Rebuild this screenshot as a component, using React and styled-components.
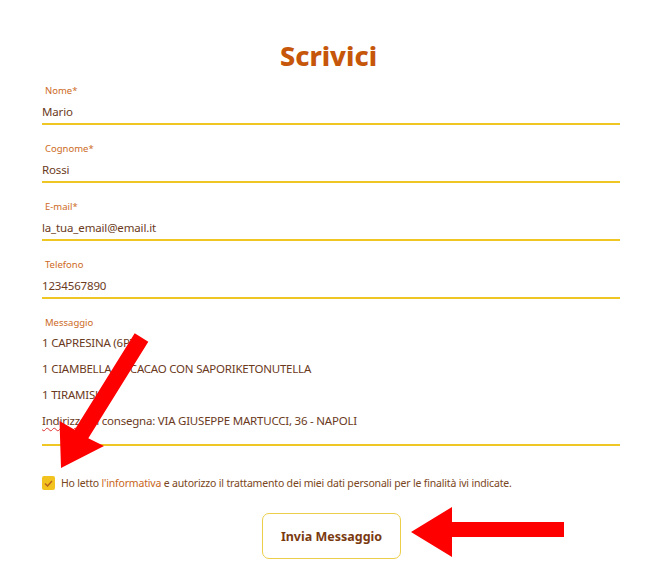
import React from "react";
import styled, { createGlobalStyle } from "styled-components";

const fields = [
  { label: "Nome*", value: "Mario" },
  { label: "Cognome*", value: "Rossi" },
  { label: "E-mail*", value: "la_tua_email@email.it" },
  { label: "Telefono", value: "1234567890" },
];

const GlobalStyle = createGlobalStyle`
  * { box-sizing: border-box; }
  body {
    margin: 0;
    background: #ffffff;
    font-family: "Noto Sans", "Open Sans", sans-serif;
  }
`;

export default function App() {
  return (
    <>
      <GlobalStyle />
      <Page>
        <Title>Scrivici</Title>
        <Form>
          {fields.map(({ label, value }) => (
            <Field key={label}>
              <Label>{label}</Label>
              <Value>{value}</Value>
            </Field>
          ))}

          <Field>
            <Label>Messaggio</Label>
            <Message>
              <div>1 CAPRESINA (6PZ)</div>
              <div>1 CIAMBELLA AL CACAO CON SAPORIKETONUTELLA</div>
              <div>1 TIRAMISU'</div>
              <div>
                <Misspelled>Indirizzo</Misspelled> di consegna: VIA GIUSEPPE MARTUCCI, 36 - NAPOLI
              </div>
            </Message>
          </Field>

          <Consent>
            <CheckBox>
              <svg width="9" height="7" viewBox="0 0 9 7">
                <polyline points="1,3.5 3.5,6 8,1" fill="none" stroke="#b8621c" strokeWidth="1.4" />
              </svg>
            </CheckBox>
            <span>
              Ho letto <InfoLink>l'informativa</InfoLink> e autorizzo il trattamento dei miei dati personali per le finalità ivi indicate.
            </span>
          </Consent>

          <ButtonRow>
            <SendButton>Invia Messaggio</SendButton>
          </ButtonRow>
        </Form>

        {/* frecce rosse sopra il modulo */}
        <Arrows width="657" height="572" viewBox="0 0 657 572">
          <polygon
            fill="#ff0000"
            points="134.7,333.3 148.3,341.7 88.3,438.2 104,446 61,468 59.5,421 74.7,429.8"
          />
          <polygon
            fill="#ff0000"
            points="564,522 452,522 452,507 411,532 452,557 452,537 564,537"
          />
        </Arrows>
      </Page>
    </>
  );
}

const Page = styled.main`
  position: relative;
  width: 657px;
  height: 572px;
  padding-top: 41px;
  overflow: hidden;
`;

const Title = styled.h1`
  margin: 0 0 13px;
  font-family: "Noto Sans", sans-serif;
  font-size: 27px;
  line-height: 30px;
  font-weight: 800;
  color: #c6560a;
  text-align: center;
`;

const Form = styled.form`
  width: 578px;
  margin-left: 42px;
  display: flex;
  flex-direction: column;
`;

const Field = styled.div`
  display: flex;
  flex-direction: column;
  margin-bottom: 17px;
`;

const Label = styled.label`
  padding-left: 3px;
  font-size: 9.5px;
  line-height: 14px;
  color: #cd6a24;
`;

const Value = styled.div`
  margin-top: 4px;
  padding-bottom: 1px;
  font-size: 11.5px;
  line-height: 20px;
  letter-spacing: -0.15px;
  color: #6b3a1c;
  border-bottom: 2px solid #efc724;
`;

const Message = styled.div`
  padding-bottom: 10px;
  font-size: 11.5px;
  line-height: 26px;
  letter-spacing: -0.22px;
  color: #6b3a1c;
  border-bottom: 2px solid #efc724;
`;

const Misspelled = styled.span`
  text-decoration: underline wavy #e03030;
  text-decoration-thickness: 1px;
  text-underline-offset: 2px;
`;

const Consent = styled.div`
  margin-top: 10px;
  display: flex;
  align-items: center;
  gap: 6px;
  height: 20px;
  font-size: 10.5px;
  letter-spacing: -0.18px;
  color: #7a4621;
`;

const CheckBox = styled.span`
  width: 13px;
  height: 14px;
  border-radius: 2px;
  background: #f2c31e;
  display: flex;
  align-items: center;
  justify-content: center;
  flex-shrink: 0;
`;

const InfoLink = styled.span`
  color: #c8641a;
`;

const ButtonRow = styled.div`
  margin-top: 20px;
  display: flex;
  padding-left: 220px;
`;

const SendButton = styled.button`
  width: 139px;
  height: 46px;
  background: #ffffff;
  border: 1.5px solid #ebcf48;
  border-radius: 7px;
  font-family: "Noto Sans", sans-serif;
  font-size: 12.5px;
  font-weight: 700;
  color: #7a3a10;
`;

const Arrows = styled.svg`
  position: absolute;
  top: 0;
  left: 0;
  pointer-events: none;
`;
